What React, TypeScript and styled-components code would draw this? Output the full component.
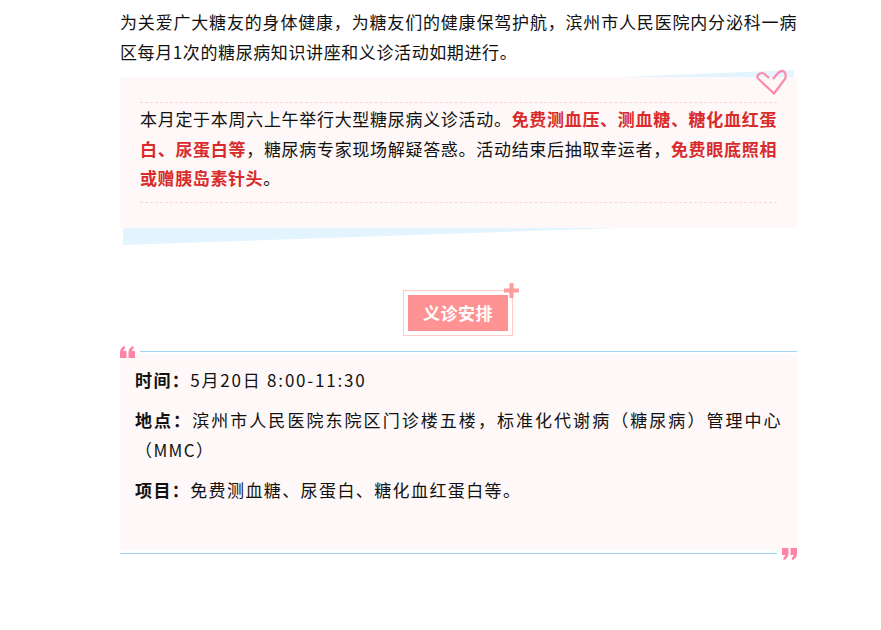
import React from "react";
import styled, { createGlobalStyle } from "styled-components";

const Global = createGlobalStyle`
  html, body { margin: 0; padding: 0; background: #fff; }
  body { font-family: "Noto Sans CJK SC", "Liberation Sans", sans-serif; color: #111; }
`;

const Page = styled.div`
  width: 677px;
  height: 630px;
  margin-left: 120px;
  overflow: hidden;
`;

const Intro = styled.p`
  margin: 7px 0 0;
  font-size: 17px;
  line-height: 30px;
  letter-spacing: 0.6px;
  text-align: justify;
`;

const NoticeWrap = styled.div`
  position: relative;
  margin-top: 10px;
  height: 151px;
`;

const NoticeCard = styled.div`
  height: 151px;
  padding: 25px 20px 0;
  box-sizing: border-box;
  background: #fff8f8;
`;

const NoticeInner = styled.div`
  border-top: 1px dashed #ffd3de;
  border-bottom: 1px dashed #ffd3de;
  padding: 1px 0 9.5px;
`;

const NoticeText = styled.p`
  margin: 0;
  font-size: 17px;
  line-height: 29.5px;
  letter-spacing: 0.6px;
  text-align: justify;
`;

const Strong = styled.strong`
  color: #d92b2b;
  font-weight: 700;
`;

const Ribbon = styled.svg<{ $top: number }>`
  position: absolute;
  left: 0;
  width: 677px;
  height: 20px;
  top: ${(p) => p.$top}px;
`;

const Heart = styled.svg`
  position: absolute;
  right: 9px;
  top: -8px;
  width: 32px;
  height: 26px;
`;

const BadgeRow = styled.div`
  display: flex;
  justify-content: center;
  margin-top: 62px;
`;

const BadgeFrame = styled.div`
  position: relative;
  padding: 4px;
  border: 1px solid #ffc9c9;
  margin-left: -1px;
`;

const Badge = styled.div`
  width: 100px;
  height: 36px;
  background: #ff9393;
  color: #fff;
  font-size: 17px;
  font-weight: 700;
  line-height: 35px;
  letter-spacing: 0.5px;
  text-align: center;
`;

const Plus = styled.svg`
  position: absolute;
  right: -7px;
  top: -8px;
  width: 15px;
  height: 15px;
`;

const Schedule = styled.section`
  margin-top: 10px;
`;

const RuleRow = styled.div`
  display: flex;
  align-items: flex-start;
  gap: 5px;
  height: 12px;
`;

const Rule = styled.div`
  flex: 1;
  height: 1px;
  margin-top: 5px;
  background: #9fd6f5;
`;

const Quote = styled.svg`
  width: 15px;
  height: 12px;
  flex: none;
`;

const ScheduleBody = styled.div`
  background: #fff8f8;
  height: 196px;
  margin-top: -4px;
  padding: 11px 15px 0;
  box-sizing: border-box;
`;

const Row = styled.p`
  margin: 0 0 10px;
  font-size: 17px;
  line-height: 30px;
  letter-spacing: 1.4px;
  text-align: justify;
`;

const Label = styled.strong`
  font-weight: 700;
`;

const Digits = styled.span`
  letter-spacing: 1.8px;
`;

const FootRule = styled(RuleRow)`
  margin-top: -2px;
`;

function QuoteMark({ flip }: { flip?: boolean }) {
  return (
    <Quote viewBox="0 0 15 12">
      <g fill="#ff85a8" transform={flip ? "rotate(180 7.5 6)" : undefined}>
        <path d="M0 6.500 C0 3 2 .8 5 0 V2.500 C4 3 3.500 4 3.500 5 H6.500 V12 H0 Z" />
        <path d="M8.500 6.500 C8.500 3 10.500 .8 13.500 0 V2.500 C12.500 3 12 4 12 5 H15 V12 H8.500 Z" />
      </g>
    </Quote>
  );
}

export default function App() {
  return (
    <Page>
      <Global />
      <Intro>
        为关爱广大糖友的身体健康，为糖友们的健康保驾护航，滨州市人民医院内分泌科一病区每月1次的糖尿病知识讲座和义诊活动如期进行。
      </Intro>
      <NoticeWrap>
        <Ribbon $top={-7} viewBox="0 0 677 20" preserveAspectRatio="none">
          <polygon points="500,7 674,0 674,7" fill="#e4f4fe" />
        </Ribbon>
        <Ribbon $top={151} viewBox="0 0 677 20" preserveAspectRatio="none">
          <polygon points="3,0 500,0 3,17" fill="#e4f4fe" />
        </Ribbon>
        <NoticeCard>
          <NoticeInner>
            <NoticeText>
              本月定于本周六上午举行大型糖尿病义诊活动。<Strong>免费测血压、测血糖、糖化血红蛋白、尿蛋白等</Strong>，糖尿病专家现场解疑答惑。活动结束后抽取幸运者，<Strong>免费眼底照相或赠胰岛素针头</Strong>。
            </NoticeText>
          </NoticeInner>
        </NoticeCard>
        <Heart viewBox="0 0 32 26">
          <path
            d="M13 9 C10 6 8 4 6 4 C3 4 1 6.500 1.500 8.500 C2 10 4 11.500 18 24.500 L29 10 C30.500 7 29.500 3 27 2 C24 1 21 5 17 10"
            fill="none"
            stroke="#ff88a8"
            strokeWidth="2.200"
          />
        </Heart>
      </NoticeWrap>
      <BadgeRow>
        <BadgeFrame>
          <Badge>义诊安排</Badge>
          <Plus viewBox="0 0 15 15">
            <path d="M5.500 0 H9.500 V5.500 H15 V9.500 H9.500 V15 H5.500 V9.500 H0 V5.500 H5.500 Z" fill="#ff9c9c" />
          </Plus>
        </BadgeFrame>
      </BadgeRow>
      <Schedule>
        <RuleRow>
          <QuoteMark />
          <Rule />
        </RuleRow>
        <ScheduleBody>
          <Row>
            <Label>时间：</Label>
            <Digits>5月20日 8:00-11:30</Digits>
          </Row>
          <Row>
            <Label>地点：</Label>滨州市人民医院东院区门诊楼五楼，标准化代谢病（糖尿病）管理中心（MMC）
          </Row>
          <Row>
            <Label>项目：</Label>免费测血糖、尿蛋白、糖化血红蛋白等。
          </Row>
        </ScheduleBody>
        <FootRule>
          <Rule />
          <QuoteMark flip />
        </FootRule>
      </Schedule>
    </Page>
  );
}
